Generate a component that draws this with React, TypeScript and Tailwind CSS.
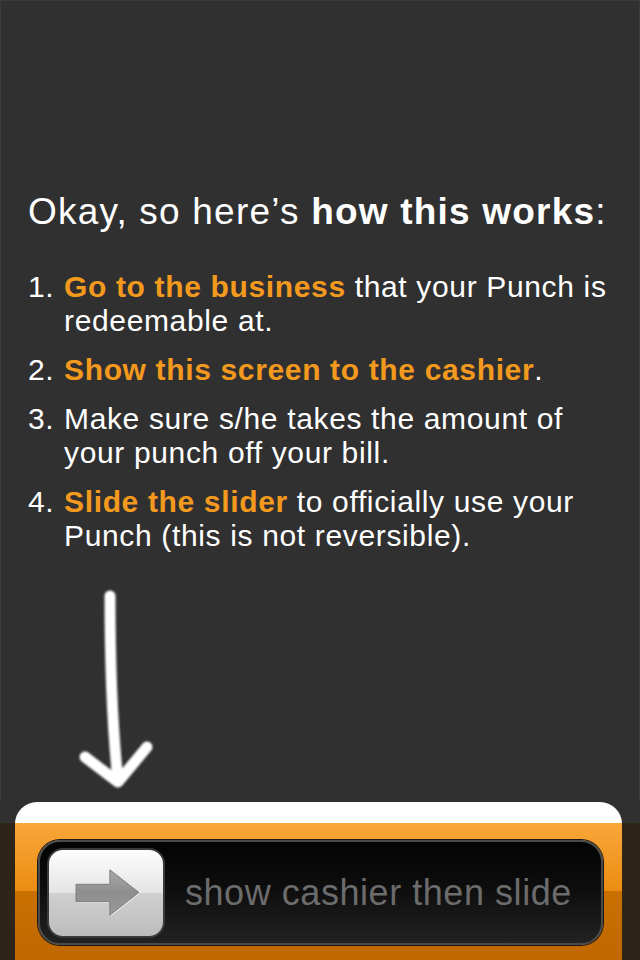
import React from "react";

function DownArrow() {
  return (
    <svg width="100" height="210" viewBox="0 0 100 210" className="block">
      <defs>
        <filter id="soft" x="-20%" y="-20%" width="140%" height="140%">
          <feGaussianBlur stdDeviation="0.9" />
        </filter>
      </defs>
      <g
        fill="none"
        stroke="#ffffff"
        strokeWidth="11"
        strokeLinecap="round"
        strokeLinejoin="round"
        filter="url(#soft)"
      >
        <path d="M35 12 C 35 70, 37 140, 43 197" />
        <path d="M10 173 L 43 198 L 72 163" />
      </g>
    </svg>
  );
}

function KnobArrow() {
  return (
    <svg width="118" height="90" viewBox="0 0 118 90" className="block">
      <defs>
        <linearGradient id="ag" x1="0" y1="0" x2="0" y2="1">
          <stop offset="0" stopColor="#a9a9a9" />
          <stop offset="0.5" stopColor="#8e8e8e" />
          <stop offset="1" stopColor="#9a9a9a" />
        </linearGradient>
      </defs>
      <path
        d="M28 36 H63 V21 L93 44.5 L63 68 V54 H28 Z"
        fill="#f4f4f4"
        transform="translate(0.8,1)"
      />
      <path
        d="M28 36 H63 V21 L93 44.5 L63 68 V54 H28 Z"
        fill="url(#ag)"
        stroke="#7a7a7a"
        strokeWidth="1"
        strokeLinejoin="round"
      />
    </svg>
  );
}

export default function App() {
  const items: { n: string; content: React.ReactNode }[] = [
    {
      n: "1.",
      content: (
        <>
          <b className="font-bold text-[#f39a1e]">Go to the business</b> that your Punch is
          <br />
          redeemable at.
        </>
      ),
    },
    {
      n: "2.",
      content: (
        <>
          <b className="font-bold text-[#f39a1e]">Show this screen to the cashier</b>.
        </>
      ),
    },
    {
      n: "3.",
      content: (
        <>
          Make sure s/he takes the amount of
          <br />
          your punch off your bill.
        </>
      ),
    },
    {
      n: "4.",
      content: (
        <>
          <b className="font-bold text-[#f39a1e]">Slide the slider</b> to officially use your
          <br />
          Punch (this is not reversible).
        </>
      ),
    },
  ];

  return (
    <div
      className="w-[640px] h-[960px] bg-[#303030] flex flex-col overflow-hidden shadow-[inset_0_0_0_1px_#3b3b3b] text-white"
      style={{ fontFamily: '"Liberation Sans", Arial, sans-serif' }}
    >
      <div className="pt-[190px] pl-[28px] text-[37px] leading-[44px] tracking-[1.2px] whitespace-nowrap">
        Okay, so here’s <b className="font-bold">how this works</b>:
      </div>

      <div className="mt-[36px] pl-[28px] flex flex-col gap-[15px] text-[30px] leading-[34px] tracking-[0.65px] whitespace-nowrap">
        {items.map((it) => (
          <div key={it.n} className="grid grid-cols-[36px_1fr]">
            <div>{it.n}</div>
            <div>{it.content}</div>
          </div>
        ))}
      </div>

      <div className="mt-[31px] ml-[75px]">
        <DownArrow />
      </div>

      <div className="flex-1" />

      <div className="h-[158px] pl-[15px] pr-[18px] bg-[linear-gradient(to_bottom,#303030_0px,#303030_21px,#2e2519_21px,#2e2519_100%)]">
        <div className="h-full rounded-t-[22px] pt-[38px] pl-[23px] pr-[19px] bg-[linear-gradient(to_bottom,#ffffff_0px,#ffffff_21px,#f8a73a_21px,#ec8c12_89px,#c97000_89px,#c06800_100%)]">
          <div className="h-[105px] rounded-[22px] border-2 border-[#4a4a4a] shadow-[0_0_0_1px_#1a1a1a] bg-[linear-gradient(to_bottom,#030303,#0d0d0d_45%,#222222)] flex items-center pl-[7px]">
            <div className="w-[118px] h-[90px] rounded-[16px] border-2 border-[#3a3a3a] bg-[linear-gradient(to_bottom,#fdfdfd,#e4e4e4_50%,#d0d0d0_50%,#bcbcbc)] flex items-center justify-center shrink-0 overflow-hidden">
              <KnobArrow />
            </div>
            <div className="ml-[20px] text-[36px] leading-none text-[#6c6c6c] tracking-[0.55px] whitespace-nowrap">
              show cashier then slide
            </div>
          </div>
        </div>
      </div>
    </div>
  );
}
